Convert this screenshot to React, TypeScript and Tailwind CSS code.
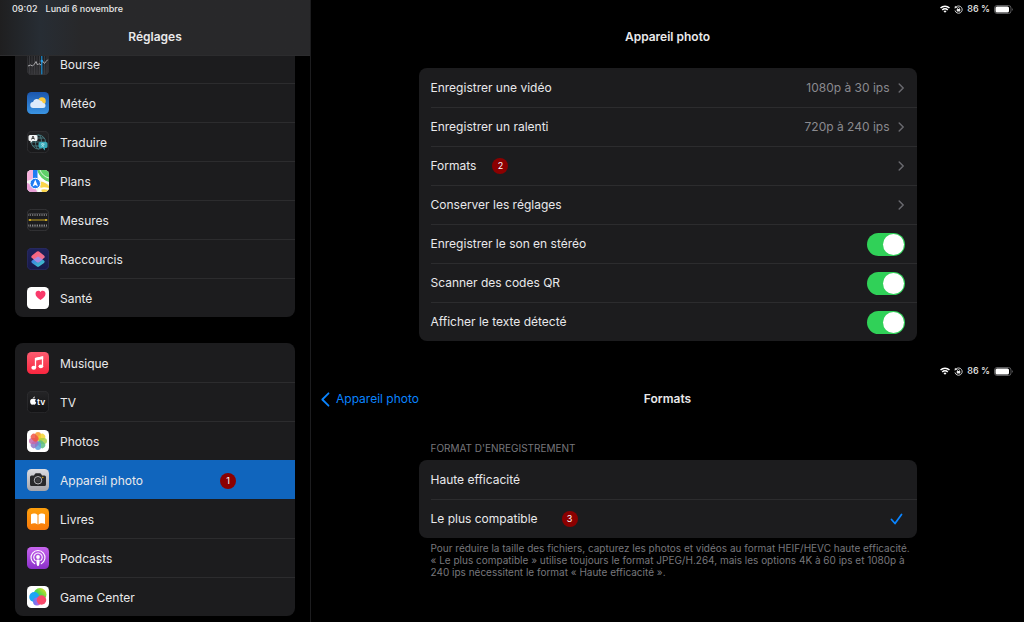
import { useState } from 'react'
import type { ReactNode } from 'react'
import clsx from 'clsx'

interface AppEntry {
  name: string
  icon: ReactNode
  step?: number
}

function Tile({ id, from, to, border, children }: { id: string; from: string; to?: string; border?: string; children?: ReactNode }) {
  return (
    <svg viewBox="0 0 44 44" className="size-[22px] shrink-0" aria-hidden="true">
      <defs>
        <linearGradient id={`${id}-bg`} x1="0" y1="0" x2="0" y2="1">
          <stop offset="0%" stopColor={from} />
          <stop offset="100%" stopColor={to ?? from} />
        </linearGradient>
        <clipPath id={`${id}-clip`}>
          <rect width="44" height="44" rx="9" />
        </clipPath>
      </defs>
      <g clipPath={`url(#${id}-clip)`}>
        <rect width="44" height="44" fill={`url(#${id}-bg)`} />
        {children}
      </g>
      {border && <rect x="0.75" y="0.75" width="42.5" height="42.5" rx="8.5" fill="none" stroke={border} strokeWidth="1.5" />}
    </svg>
  )
}

const stocksIcon = (
  <Tile id="stocks" from="#1b1b1d" to="#303033" border="#343437">
    {[5, 10, 15, 20, 25, 35, 40].map(x => (
      <line key={x} x1={x} x2={x} y1="0" y2="44" stroke="#414145" strokeWidth="1.5" />
    ))}
    <path d="M2 26l5-2 4 2 4-4 3-5 3 7 3-3 4 3 3-8 4 5 3-4 4-4" fill="none" stroke="#a9a9ac" strokeWidth="2" />
    <line x1="29.5" x2="29.5" y1="4" y2="44" stroke="#1686c9" strokeWidth="2.5" />
    <circle cx="29.5" cy="16" r="2.5" fill="#2da2ea" />
  </Tile>
)

const weatherIcon = (
  <Tile id="weather" from="#1b56ad" to="#3a94e3">
    <circle cx="30" cy="18" r="7.5" fill="#fbc93d" />
    <path d="M13 32a6 6 0 0 1-1-12 8 8 0 0 1 14-3 7 7 0 0 1 6 5 5 5 0 0 1 0 10z" fill="#dceafb" />
  </Tile>
)

const translateIcon = (
  <Tile id="translate" from="#232325" to="#18181a" border="#343437">
    <g fill="none" stroke="#47797f" strokeWidth="2">
      <circle cx="23" cy="22" r="14" />
      <ellipse cx="23" cy="22" rx="6" ry="14" />
      <path d="M9 22h28M12 14h22M12 30h22" />
    </g>
    <path d="M6 8h12a3 3 0 0 1 3 3v6a3 3 0 0 1-3 3H11l-4 4v-4H6a3 3 0 0 1-3-3v-6a3 3 0 0 1 3-3z" fill="#f3f5f6" />
    <path d="M9 17l3-7 3 7M10 15h4" fill="none" stroke="#222" strokeWidth="1.6" />
    <path d="M26 22h12a3 3 0 0 1 3 3v6a3 3 0 0 1-3 3h-2v5l-5-5h-5a3 3 0 0 1-3-3v-6a3 3 0 0 1 3-3z" fill="#39aab8" />
    <path d="M28 26h7M31.5 24v2M34 26c-1 3-3 4-5 5M29 27c1 2 3 3 5 4" fill="none" stroke="#c9f1f4" strokeWidth="1.3" />
  </Tile>
)

const mapsIcon = (
  <Tile id="maps" from="#f2f5ef">
    <path d="M20 0h24v24C34 22 24 12 20 0z" fill="#5fd068" />
    <path d="M0 0h12v18L0 22z" fill="#f6b3dc" />
    <path d="M0 26c8 2 18 8 20 18H0z" fill="#e9a0d6" />
    <path d="M24 24c8-2 14 2 20 8v12H30z" fill="#fbd54a" />
    <path d="M18 0c3 14 14 24 26 26M24 44c0-6 6-10 20-6" fill="none" stroke="#fff" strokeWidth="4" />
    <path d="M26 0c3 8 9 14 18 16" fill="none" stroke="#d9f5d9" strokeWidth="2" />
    <rect x="12" y="0" width="9" height="20" fill="#1f7cf2" />
    <circle cx="16.5" cy="27" r="10.5" fill="#1f7cf2" stroke="#fff" strokeWidth="2" />
    <path d="M16.5 19l5.5 14-5.5-3-5.5 3z" fill="#fff" />
  </Tile>
)

const measureIcon = (
  <Tile id="measure" from="#1c1c1e" border="#3c3c3f">
    <path d="M3 12h38" stroke="#818184" strokeWidth="4" strokeDasharray="1.5 2" />
    <path d="M3 9h38M3 36h38" stroke="#5d5d60" strokeWidth="1" />
    <path d="M3 33h38" stroke="#a9a9ab" strokeWidth="4" strokeDasharray="1.5 2" />
    <path d="M3 22h38" stroke="#c9a51f" strokeWidth="2" />
    <circle cx="6" cy="22" r="2" fill="#e6bd25" />
    <circle cx="38" cy="22" r="2" fill="#e6bd25" />
  </Tile>
)

const shortcutsIcon = (
  <Tile id="shortcuts" from="#20235c" to="#17194a" border="#2b2d62">
    <defs>
      <linearGradient id="sc-top" x1="0" y1="0" x2="1" y2="1">
        <stop offset="0%" stopColor="#ff5f74" />
        <stop offset="100%" stopColor="#e7769e" />
      </linearGradient>
      <linearGradient id="sc-low" x1="0" y1="0" x2="1" y2="1">
        <stop offset="0%" stopColor="#3c6df0" />
        <stop offset="100%" stopColor="#3ed0c0" />
      </linearGradient>
    </defs>
    <path d="M10 25q-3 2 0 5l10 7q2 1.500 4 0l10-7q3-3 0-5l-12-8z" fill="url(#sc-low)" />
    <path d="M10 15l10-8q2-1.500 4 0l10 8q3 3 0 5l-10 8q-2 1.500-4 0l-10-8q-3-2 0-5z" fill="url(#sc-top)" />
    <path d="M22 17l9 6-7 5q-2 1.500-4 0l-7-5z" fill="#a58be6" />
  </Tile>
)

const healthIcon = (
  <Tile id="health" from="#ffffff">
    <path d="M27 26c-6-4-10-7.500-10-12.500C17 10 19.500 7.500 22.500 7.500c2 0 3.500 1 4.500 2.500 1-1.500 2.500-2.500 4.500-2.500 3 0 5.500 2.500 5.500 6C37 18.500 33 22 27 26z" fill="#f93a6b" />
  </Tile>
)

const musicIcon = (
  <Tile id="music" from="#fb5c70" to="#f9263f">
    <path d="M17 32V13l14-3v18.500" fill="none" stroke="#fff" strokeWidth="2.6" />
    <path d="M16 12l16.300-3.600v5.500L16 17.500z" fill="#fff" />
    <ellipse cx="13.500" cy="31.500" rx="4.8" ry="3.9" fill="#fff" />
    <ellipse cx="27.700" cy="28.700" rx="4.7" ry="3.9" fill="#fff" />
  </Tile>
)

const tvIcon = (
  <Tile id="tv" from="#252527" to="#121214" border="#303033">
    <path d="M12.500 16c1.800-1 4-.8 5.300 1-2.300 1.700-1.800 5 .7 6.200-1 2.800-2.700 5-4.500 4.300-1.200-.5-1.800-.5-3 0C8.500 28 6 24 6.200 20.500c.2-3.500 3.300-5.700 6.300-4.500z" fill="#fff" />
    <path d="M12.200 15c0-2.200 1.400-3.700 3.300-4 .2 2.200-1.300 3.900-3.300 4z" fill="#fff" />
    <text x="20" y="27.500" fontSize="17" fontWeight="600" fill="#fff" fontFamily="Inter, sans-serif">tv</text>
  </Tile>
)

const PETALS = ['#f7962a', '#f2d32f', '#a9cf45', '#5cbd83', '#5aa0dc', '#8d76c6', '#c566a8', '#ee5545']

const photosIcon = (
  <Tile id="photos" from="#ffffff">
    {PETALS.map((color, i) => (
      <rect key={color} x="16" y="4" width="12" height="17" rx="6" fill={color} fillOpacity="0.85" transform={`rotate(${i * 45} 22 22)`} />
    ))}
  </Tile>
)

const cameraIcon = (
  <Tile id="camera" from="#dcdce0" to="#a4a4aa">
    <path d="M9 13h5l2-3.500q.7-1 2-1h8q1.300 0 2 1L30 13h5q3 0 3 3v15q0 3-3 3H9q-3 0-3-3V16q0-3 3-3z" fill="#29292b" />
    <circle cx="22" cy="22.500" r="7.5" fill="none" stroke="#c4c4c8" strokeWidth="1.8" />
    <circle cx="22" cy="22.500" r="4.5" fill="#3c3c3f" />
    <circle cx="31.500" cy="17" r="1.4" fill="#f2b90c" />
  </Tile>
)

const booksIcon = (
  <Tile id="books" from="#fd9f0c" to="#f8790b">
    <path d="M21 14c-3-3.500-10-3.500-13-1v19c4-2 10-2 13 1zM23 14c3-3.500 10-3.500 13-1v19c-4-2-10-2-13 1z" fill="#fff" />
  </Tile>
)

const podcastsIcon = (
  <Tile id="podcasts" from="#c765ee" to="#8a2fc9">
    <g fill="none" stroke="#fff" strokeWidth="2.2" strokeLinecap="round">
      <path d="M15.500 33.500a14 14 0 1 1 13 0" />
      <path d="M16.500 27a8.500 8.500 0 1 1 11 0" />
    </g>
    <circle cx="22" cy="20" r="3.8" fill="#fff" />
    <path d="M18.500 27q0-2 2-2h3q2 0 2 2l-1.200 9q-.3 2-2.300 2t-2.300-2z" fill="#fff" />
  </Tile>
)

const gameCenterIcon = (
  <Tile id="gamecenter" from="#ffffff">
    <defs>
      <linearGradient id="gc-main" x1="0" y1="1" x2="1" y2="0">
        <stop offset="20%" stopColor="#35d3a0" />
        <stop offset="50%" stopColor="#4fd648" />
        <stop offset="100%" stopColor="#f8df25" />
      </linearGradient>
      <linearGradient id="gc-low" x1="0" y1="0" x2="1" y2="0">
        <stop offset="0%" stopColor="#5c7bf5" />
        <stop offset="100%" stopColor="#d95bd0" />
      </linearGradient>
    </defs>
    <circle cx="26" cy="17" r="13" fill="url(#gc-main)" />
    <circle cx="14.500" cy="22" r="10" fill="#1ca5f4" />
    <circle cx="20" cy="31" r="8" fill="url(#gc-low)" />
    <circle cx="29" cy="28" r="9.5" fill="#f8496a" />
  </Tile>
)

const GROUPS: AppEntry[][] = [
  [
    { name: 'Bourse', icon: stocksIcon },
    { name: 'Météo', icon: weatherIcon },
    { name: 'Traduire', icon: translateIcon },
    { name: 'Plans', icon: mapsIcon },
    { name: 'Mesures', icon: measureIcon },
    { name: 'Raccourcis', icon: shortcutsIcon },
    { name: 'Santé', icon: healthIcon },
  ],
  [
    { name: 'Musique', icon: musicIcon },
    { name: 'TV', icon: tvIcon },
    { name: 'Photos', icon: photosIcon },
    { name: 'Appareil photo', icon: cameraIcon, step: 1 },
    { name: 'Livres', icon: booksIcon },
    { name: 'Podcasts', icon: podcastsIcon },
    { name: 'Game Center', icon: gameCenterIcon },
  ],
]

const LINKS = [
  { label: 'Enregistrer une vidéo', value: '1080p à 30 ips' },
  { label: 'Enregistrer un ralenti', value: '720p à 240 ips' },
  { label: 'Formats', step: 2 },
  { label: 'Conserver les réglages' },
]

const TOGGLES = ['Enregistrer le son en stéréo', 'Scanner des codes QR', 'Afficher le texte détecté']

function StepBadge({ step, className }: { step: number; className?: string }) {
  return (
    <span className={clsx('flex size-4 shrink-0 items-center justify-center rounded-full bg-[#8b0000] text-[9px] text-white', className)}>
      {step}
    </span>
  )
}

function Chevron() {
  return (
    <svg viewBox="0 0 7 10" className="h-2.5 w-[7px]" fill="none" stroke="#68686d" strokeWidth="1.5" strokeLinecap="round" strokeLinejoin="round" aria-hidden="true">
      <path d="M1.200 1l4 4-4 4" />
    </svg>
  )
}

function StatusIcons() {
  return (
    <div className="flex h-[18px] items-center justify-end gap-1 pr-2.5 text-[9px] font-medium text-[#e8e8e8]">
      <svg viewBox="0 0 20 15" className="h-2 w-[10px]" aria-hidden="true">
        <g fill="none" stroke="#fff" strokeWidth="3">
          <path d="M1 5.500a12.700 12.700 0 0 1 18 0" />
          <path d="M4.500 9.500a7.800 7.800 0 0 1 11 0" />
        </g>
        <path d="M10 15l-3-3a4.300 4.300 0 0 1 6 0z" fill="#fff" />
      </svg>
      <svg viewBox="0 0 18 18" className="size-[9px]" aria-hidden="true">
        <path d="M3.500 4.500A7.300 7.300 0 1 1 2 11" fill="none" stroke="#ddd" strokeWidth="1.8" />
        <path d="M1 7l1-5.500 4.500 4z" fill="#ddd" />
        <rect x="5.500" y="8" width="7" height="5" rx="1" fill="#eee" />
        <path d="M7 8.500V7a2 2 0 0 1 4 0v1.500" fill="none" stroke="#eee" strokeWidth="1.4" />
      </svg>
      <span>86 %</span>
      <svg viewBox="0 0 40 18" className="h-[9px] w-5" aria-hidden="true">
        <rect x="1" y="1" width="33" height="16" rx="5" fill="none" stroke="#77777a" strokeWidth="1.5" />
        <rect x="3" y="3" width="27" height="12" rx="3" fill="#fff" />
        <path d="M36.500 6q3 3 0 6z" fill="#77777a" />
      </svg>
    </div>
  )
}

function Sidebar() {
  const [selected, setSelected] = useState('Appareil photo')

  return (
    <aside className="w-[311px] shrink-0 border-r border-[#1c1c1e]">
      <header className="relative z-10 h-14 border-b border-[#2c2c2e] bg-[#28282a] bg-linear-to-r from-[#1f1f20] via-[#272d34] via-13% to-[#28282a] to-26%">
        <div className="flex h-[18px] items-center gap-2 pl-3 text-[9px] font-medium text-[#e8e8e8]">
          <span>09:02</span>
          <span>Lundi 6 novembre</span>
        </div>
        <h1 className="mt-2.5 text-center leading-[18px] font-semibold">Réglages</h1>
      </header>

      {/* First group is scrolled slightly under the header */}
      <nav className="-mt-3 flex flex-col gap-[26px] px-[15px]">
        {GROUPS.map((group, g) => (
          <ul key={g} className="overflow-hidden rounded-lg bg-[#1c1c1e]">
            {group.map((app, i) => {
              const active = app.name === selected
              const noLine = i === 0 || active || group[i - 1].name === selected
              return (
                <li key={app.name}>
                  <a
                    href="#"
                    onClick={() => setSelected(app.name)}
                    className={clsx('flex h-[39px] items-center gap-[11px] pl-3', active && 'bg-[#1065bd]')}
                  >
                    {app.icon}
                    <span
                      className={clsx(
                        'flex h-full flex-1 items-center border-t pt-px',
                        noLine ? 'border-transparent' : 'border-[#2c2c2e]'
                      )}
                    >
                      {app.name}
                      {app.step && <StepBadge step={app.step} className="ml-[77px]" />}
                    </span>
                  </a>
                </li>
              )
            })}
          </ul>
        ))}
      </nav>
    </aside>
  )
}

function CameraPanel() {
  return (
    <section className="pb-[21px]">
      <StatusIcons />
      <h2 className="mt-2.5 text-center leading-[18px] font-semibold">Appareil photo</h2>
      <ul className="mx-auto mt-[22px] max-w-[498px] overflow-hidden rounded-lg bg-[#1c1c1e] pl-3">
        {LINKS.map(({ label, value, step }) => (
          <li key={label} className="border-t border-[#2c2c2e] first:border-transparent">
            <a href="#" className="flex h-[38px] items-center pr-3">
              <span>{label}</span>
              {step && <StepBadge step={step} className="ml-4" />}
              <span className="mr-2 ml-auto text-[#8a8a8f]">{value}</span>
              <Chevron />
            </a>
          </li>
        ))}
        {TOGGLES.map(label => (
          <li key={label} className="border-t border-[#2c2c2e]">
            <label className="flex h-[38px] items-center justify-between pr-3">
              {label}
              <input
                type="checkbox"
                role="switch"
                defaultChecked
                className="flex h-[23px] w-[38px] appearance-none items-center rounded-full bg-[#39393d] p-px before:size-[21px] before:rounded-full before:bg-white checked:justify-end checked:bg-[#30d158]"
              />
            </label>
          </li>
        ))}
      </ul>
    </section>
  )
}

function FormatsPanel() {
  const [format, setFormat] = useState('Le plus compatible')

  return (
    <section>
      <StatusIcons />
      <div className="mt-2.5 grid grid-cols-3 items-center px-2.5 leading-[18px]">
        <a href="#" className="flex items-center gap-1.5 text-[#0a84ff]">
          <svg viewBox="0 0 9 15" className="h-[15px] w-[9px]" fill="none" stroke="currentColor" strokeWidth="1.8" strokeLinecap="round" strokeLinejoin="round" aria-hidden="true">
            <path d="M7.500 1.300L1.300 7.500l6.200 6.200" />
          </svg>
          Appareil photo
        </a>
        <h2 className="text-center font-semibold">Formats</h2>
      </div>
      <div className="mx-auto mt-8 max-w-[498px]">
        <h3 className="mb-1 pl-3 text-[10px] leading-4 text-[#77777c] uppercase">Format d'enregistrement</h3>
        <div className="overflow-hidden rounded-lg bg-[#1c1c1e] pl-3">
          {['Haute efficacité', 'Le plus compatible'].map(name => (
            <label key={name} className="flex h-[39px] items-center border-t border-[#2c2c2e] pr-3.5 first:border-transparent">
              <input type="radio" name="format" className="sr-only" checked={format === name} onChange={() => setFormat(name)} />
              {name}
              {name === 'Le plus compatible' && <StepBadge step={3} className="ml-6" />}
              {format === name && (
                <svg viewBox="0 0 13 12" className="ml-auto h-3 w-[13px]" fill="none" stroke="#0a84ff" strokeWidth="1.8" strokeLinecap="round" strokeLinejoin="round" aria-hidden="true">
                  <path d="M1.500 6.500l3.500 4L11.500 1.500" />
                </svg>
              )}
            </label>
          ))}
        </div>
        <p className="mt-1 pl-3 text-[10px] leading-3 text-[#77777c]">
          Pour réduire la taille des fichiers, capturez les photos et vidéos au format HEIF/HEVC haute efficacité. «&nbsp;Le plus compatible&nbsp;» utilise toujours le format JPEG/H.264, mais les options 4K à 60 ips et 1080p à 240 ips nécessitent le format «&nbsp;Haute efficacité&nbsp;».
        </p>
      </div>
    </section>
  )
}

export default function App() {
  return (
    <div className="flex min-h-screen bg-black font-[Inter,sans-serif] text-[12px] text-[#e9e9eb]">
      <Sidebar />
      <main className="min-w-0 flex-1">
        <CameraPanel />
        <FormatsPanel />
      </main>
    </div>
  )
}
